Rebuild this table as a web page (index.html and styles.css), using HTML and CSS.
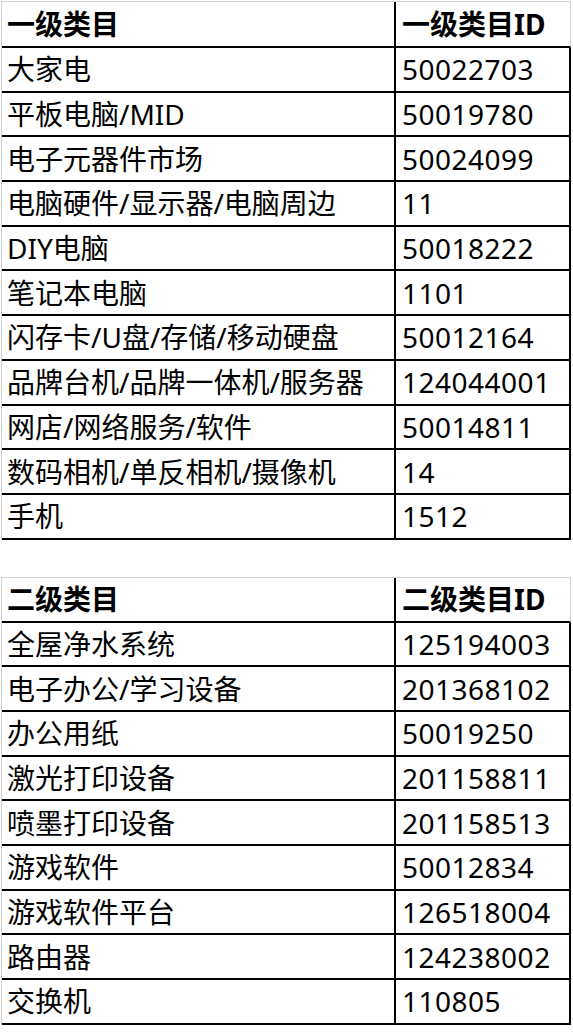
FILE: index.html
```html
<!DOCTYPE html>
<html lang="zh-CN">
<head>
<meta charset="utf-8">
<title>类目表</title>
<link rel="stylesheet" href="styles.css">
</head>
<body>
<div class="page">
  <div class="sheet sheet-one">
    <div class="cell head name">一级类目</div>
    <div class="cell head id">一级类目ID</div>
    <div class="cell name">大家电</div><div class="cell id">50022703</div>
    <div class="cell name">平板电脑/MID</div><div class="cell id">50019780</div>
    <div class="cell name">电子元器件市场</div><div class="cell id">50024099</div>
    <div class="cell name">电脑硬件/显示器/电脑周边</div><div class="cell id">11</div>
    <div class="cell name">DIY电脑</div><div class="cell id">50018222</div>
    <div class="cell name">笔记本电脑</div><div class="cell id">1101</div>
    <div class="cell name">闪存卡/U盘/存储/移动硬盘</div><div class="cell id">50012164</div>
    <div class="cell name">品牌台机/品牌一体机/服务器</div><div class="cell id">124044001</div>
    <div class="cell name">网店/网络服务/软件</div><div class="cell id">50014811</div>
    <div class="cell name">数码相机/单反相机/摄像机</div><div class="cell id">14</div>
    <div class="cell name">手机</div><div class="cell id">1512</div>
  </div>
  <div class="sheet sheet-two">
    <div class="cell head name">二级类目</div>
    <div class="cell head id">二级类目ID</div>
    <div class="cell name">全屋净水系统</div><div class="cell id">125194003</div>
    <div class="cell name">电子办公/学习设备</div><div class="cell id">201368102</div>
    <div class="cell name">办公用纸</div><div class="cell id">50019250</div>
    <div class="cell name">激光打印设备</div><div class="cell id">201158811</div>
    <div class="cell name">喷墨打印设备</div><div class="cell id">201158513</div>
    <div class="cell name">游戏软件</div><div class="cell id">50012834</div>
    <div class="cell name">游戏软件平台</div><div class="cell id">126518004</div>
    <div class="cell name">路由器</div><div class="cell id">124238002</div>
    <div class="cell name">交换机</div><div class="cell id">110805</div>
  </div>
</div>
</body>
</html>
```
FILE: styles.css
```css
html, body {
  margin: 0;
  padding: 0;
  background: #ffffff;
}

.page {
  padding: 1px 0 0 1px;
  display: flex;
  flex-direction: column;
  gap: 37px;
}

.sheet {
  display: grid;
  grid-template-columns: 394px 175px;
  grid-auto-rows: 44.7px;
  width: 569px;
  border-top: 1px solid #d0d0d0;
  border-left: 1px solid #d0d0d0;
  font-family: "Noto Sans", "Noto Sans CJK SC", sans-serif;
  font-size: 28px;
  color: #000;
}

.sheet-one {
  grid-template-rows: 46px;
}

.sheet-two {
  grid-template-rows: 45px;
}

.cell {
  box-sizing: border-box;
  display: flex;
  align-items: center;
  border-bottom: 2px solid #000;
  border-right: 2px solid #000;
  white-space: nowrap;
  overflow: hidden;
  line-height: 1;
}

.name {
  padding-left: 5px;
}

.id {
  padding-left: 6px;
  letter-spacing: 0.5px;
}

.head {
  font-weight: 700;
}

.head.id {
  border-right: 1px solid #d0d0d0;
  letter-spacing: 0;
}
```
